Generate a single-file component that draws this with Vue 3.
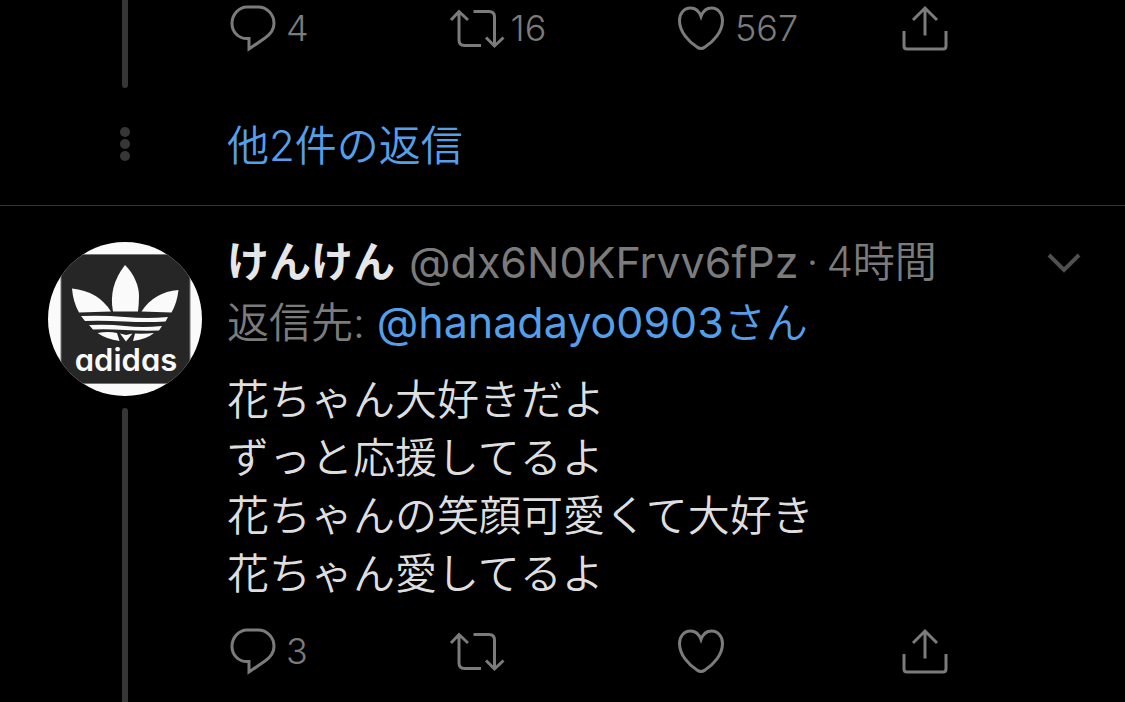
<script setup>
const tweets = [
  { id: 1, counts: { reply: '4', retweet: '16', like: '567' } },
  {
    id: 2,
    name: 'けんけん',
    handle: '@dx6N0KFrvv6fPz',
    time: '4時間',
    replyTo: '@hanadayo0903',
    lines: ['花ちゃん大好きだよ', 'ずっと応援してるよ', '花ちゃんの笑顔可愛くて大好き', '花ちゃん愛してるよ'],
    counts: { reply: '3' },
  },
]

const actions = [
  {
    key: 'reply',
    label: '返信',
    path: 'M20 3h11C40 3 47 10 47 19.5c0 6.5-4 11-9 14.5L22 45V34.5h-2C11.5 34.5 5 28 5 19.5S11.5 3 20 3z',
  },
  {
    key: 'retweet',
    label: 'リツイート',
    path: 'M-1 16L7 7.5L16 16M7 8V36Q7 41.5 12.5 41.5H29M21.5 7.5H37Q42.5 7.5 42.5 13V41.5M34 33.5L42.5 42L51.5 33.5',
  },
  {
    key: 'like',
    label: 'いいね',
    path: 'M25 12.5C23 7 19 4 14.5 4C8 4 3.5 9.5 3.5 16.5C3.5 28 13 38 21 43Q25 46 29 43C37 38 46.5 28 46.5 16.5C46.5 9.5 42 4 35.5 4C31 4 27 7 25 12.5z',
  },
  {
    key: 'share',
    label: '共有',
    path: 'M12 16L24 4L36 16M24 4V31.5M3 27V42Q3 45 6 45H42Q45 45 45 42V27',
  },
]
</script>

<template>
  <main class="thread">
    <template v-for="tweet in tweets" :key="tweet.id">
      <article class="tweet" :class="{ partial: !tweet.name }">
        <div class="rail">
          <svg v-if="tweet.name" class="avatar" viewBox="0 0 154 154" role="img" aria-label="けんけん">
            <clipPath id="round"><circle cx="77" cy="77" r="77" /></clipPath>
            <g clip-path="url(#round)">
              <rect width="154" height="154" fill="#fafafa" />
              <rect x="13" y="12.5" width="129" height="129" fill="#262626" stroke="#777" stroke-width="1" />
              <g fill="#fafafa">
                <path d="M77 23C87 33 91 45 91 54Q91 62 90 69.5H65Q60 45 77 23z" />
                <path d="M24 46.5Q50 49 63 69.5L31 70.5Q25 60 24 46.5z" />
                <path d="M130.5 48Q106 50 93.5 69.5L123.5 70.5Q129 61 130.5 48z" />
                <path d="M33 74Q55 73 77 75T120 75L117.5 79.5Q98 80.5 77 79.5T37 79z" />
                <path d="M41 83Q60 82 77 84T114 84L111 88.5Q94 89 77 88T45 87.5z" />
                <path d="M49.5 91Q60 89 69 91L71.5 99Q58 97 49.5 91z" />
                <path d="M72 91.5L78 93L84.5 91.5L78 99.5z" />
                <path d="M87 91.5Q96 92 106 91Q99 97 85 99z" />
              </g>
              <text class="brand" x="78" y="129" text-anchor="middle">adidas</text>
            </g>
          </svg>
          <span class="line"></span>
        </div>
        <div class="content">
          <template v-if="tweet.name">
            <header class="head">
              <strong class="name">{{ tweet.name }}</strong>
              <span class="handle">{{ tweet.handle }}</span>
              <span class="dot">·</span>
              <time>{{ tweet.time }}</time>
              <button class="more" type="button" aria-label="その他">
                <svg viewBox="0 0 36 24" width="36" height="24"><path d="M3 5L18 20L33 5" /></svg>
              </button>
            </header>
            <p class="reply-to">返信先: <a href="#"><span class="handle">{{ tweet.replyTo }}</span>さん</a></p>
            <p class="body"><span v-for="line in tweet.lines" :key="line">{{ line }}</span></p>
          </template>
          <div class="actions">
            <button v-for="a in actions" :key="a.key" class="action" type="button" :aria-label="a.label">
              <svg viewBox="0 0 48 48" width="48" height="48"><path :d="a.path" /></svg>
              <span v-if="tweet.counts[a.key]">{{ tweet.counts[a.key] }}</span>
            </button>
          </div>
        </div>
      </article>
      <div v-if="!tweet.name" class="more-replies">
        <div class="dots"><i></i><i></i><i></i></div>
        <a href="#">他2件の返信</a>
      </div>
    </template>
  </main>
</template>

<style>
body {
  margin: 0;
  background: #000;
}
</style>

<style scoped>
.thread {
  background: #000;
  color: #dedede;
  font-family: Inter, "Noto Sans CJK JP", sans-serif;
  font-size: 42px;
  font-weight: 350;
  line-height: 58px;
}
.tweet,
.more-replies {
  display: grid;
  grid-template-columns: 154px minmax(0, 1fr);
  column-gap: 25px;
  padding-left: 48px;
}
.tweet {
  padding-top: 27px;
}
.tweet.partial {
  padding-top: 0;
}
.rail {
  display: flex;
  flex-direction: column;
  align-items: center;
  gap: 12px;
  padding-top: 9px;
}
.partial .rail {
  padding-top: 0;
}
.avatar {
  width: 154px;
  height: 154px;
}
.brand {
  fill: #fafafa;
  font-size: 31px;
  font-weight: 600;
  font-feature-settings: "cv11";
}
.line {
  flex: 1;
  width: 6px;
  background: #363636;
  border-radius: 3px 3px 0 0;
}
.partial .line {
  border-radius: 0 0 3px 3px;
}
.content {
  padding-bottom: 28px;
}
.partial .content {
  padding: 4px 0 36px;
}
.head {
  display: flex;
  align-items: center;
  white-space: nowrap;
  padding-right: 43px;
  color: #7b7b7b;
}
.name {
  color: #e6e6e6;
  font-weight: 700;
  margin-right: 14px;
}
.handle {
  font-size: 43px;
  font-weight: 400;
}
.dot {
  margin: 0 8px;
}
.more {
  display: flex;
  margin-left: auto;
}
.more path {
  stroke: #505050;
  stroke-width: 4;
}
p {
  margin: 0;
}
.reply-to {
  margin-top: 2px;
  color: #7b7b7b;
}
a {
  color: #559fe8;
  text-decoration: none;
}
.body {
  margin: 19px 0 24px;
}
.body span {
  display: block;
}
.actions {
  display: grid;
  grid-template-columns: repeat(4, minmax(0, 1fr));
}
button {
  padding: 0;
  border: 0;
  background: none;
  color: #7b7b7b;
  font: inherit;
}
.action {
  display: flex;
  align-items: center;
  gap: 11px;
  font-size: 36px;
  line-height: 48px;
}
svg {
  flex: none;
  overflow: visible;
}
button path {
  fill: none;
  stroke: #7b7b7b;
  stroke-width: 3;
}
.more-replies {
  align-items: center;
  padding-top: 29px;
  padding-bottom: 30px;
  border-bottom: 1px solid #333;
}
.dots {
  display: flex;
  flex-direction: column;
  align-items: center;
  gap: 2px;
  padding-bottom: 4px;
}
.dots i {
  width: 10px;
  height: 10px;
  border-radius: 50%;
  background: #363636;
}
</style>
